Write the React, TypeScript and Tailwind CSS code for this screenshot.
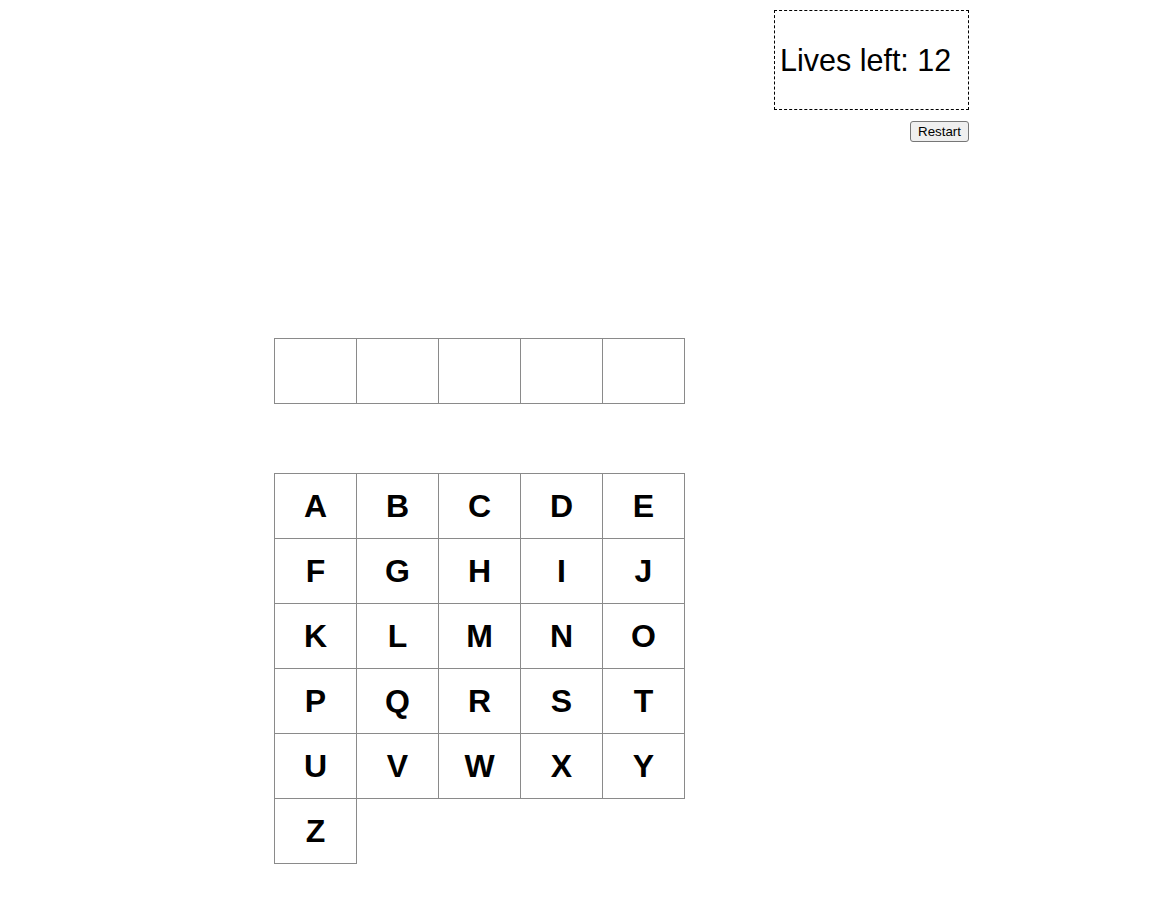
import React from 'react';

const LETTERS = 'ABCDEFGHIJKLMNOPQRSTUVWXYZ'.split('');

export default function App() {
  const word = ['', '', '', '', ''];

  return (
    <div className="min-h-screen bg-white text-black font-['Liberation_Sans',Arial,sans-serif]">
      <div className="ml-[274px] w-[695px] pt-[10px] flex flex-col">
        {/* Lives + restart */}
        <div className="flex flex-col items-end">
          <div className="w-[195px] h-[100px] border border-dashed border-black flex items-center px-[5px]">
            <span className="text-[30.5px] leading-none">Lives left: 12</span>
          </div>
          <button className="mt-[11px] h-[21px] px-[7px] border border-[#767676] bg-[#efefef] rounded-[3px] text-[13.33px] leading-none">
            Restart
          </button>
        </div>

        {/* Word slots */}
        <div className="mt-[196px] grid grid-cols-[repeat(5,82px)] pl-px pt-px w-max">
          {word.map((ch, i) => (
            <div
              key={i}
              className="w-[83px] h-[66px] -ml-px -mt-px border border-[#8a8a8a] flex items-center justify-center text-[32px] font-bold"
            >
              {ch}
            </div>
          ))}
        </div>

        {/* Alphabet */}
        <div className="mt-[69px] grid grid-cols-[repeat(5,82px)] pl-px pt-px w-max">
          {LETTERS.map((l) => (
            <div
              key={l}
              className="w-[83px] h-[66px] -ml-px -mt-px border border-[#8a8a8a] flex items-center justify-center text-[32px] font-bold cursor-pointer"
            >
              {l}
            </div>
          ))}
        </div>
      </div>
    </div>
  );
}
